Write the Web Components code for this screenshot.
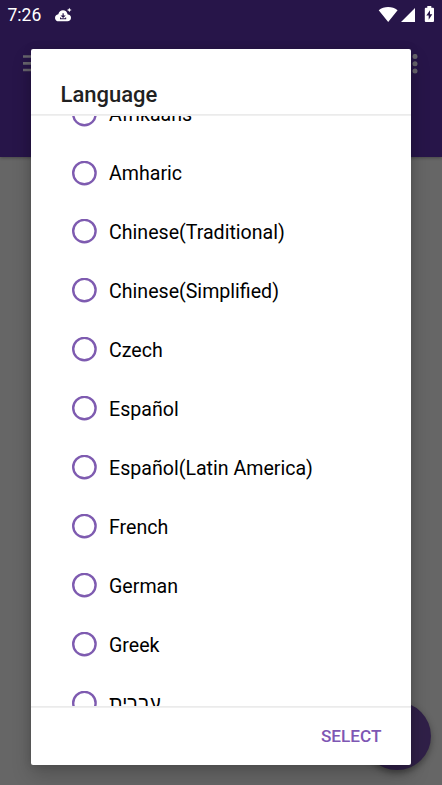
<!DOCTYPE html>
<html lang="en">
<head>
<meta charset="utf-8">
<title>Language</title>
<style>
html, body { margin: 0; height: 100%; overflow: hidden; }
body { font-family: Roboto, "Noto Sans", "Liberation Sans", sans-serif; background: #666; }
</style>
</head>
<body>
<app-screen>
  <status-bar slot="status" time="7:26"></status-bar>
  <app-toolbar slot="toolbar"></app-toolbar>
  <floating-button slot="fab"></floating-button>
  <choice-dialog slot="dialog" heading="Language">
    <radio-row>Afrikaans</radio-row>
    <radio-row>Amharic</radio-row>
    <radio-row>Chinese(Traditional)</radio-row>
    <radio-row>Chinese(Simplified)</radio-row>
    <radio-row>Czech</radio-row>
    <radio-row>Español</radio-row>
    <radio-row>Español(Latin America)</radio-row>
    <radio-row>French</radio-row>
    <radio-row>German</radio-row>
    <radio-row>Greek</radio-row>
    <radio-row>עברית</radio-row>
    <span slot="action">SELECT</span>
  </choice-dialog>
</app-screen>
<script>
function define(name, html, setup) {
  customElements.define(name, class extends HTMLElement {
    constructor() {
      super();
      this.attachShadow({ mode: 'open' }).innerHTML = html;
    }
    connectedCallback() { if (setup) setup(this, this.shadowRoot); }
  });
}

define('app-screen', `
<style>
:host { display: block; position: relative; height: 785px; overflow: hidden; background: #666; }
.head { height: 156.5px; background: #271549; box-shadow: 0 1px 3px rgba(0,0,0,.3); }
.fab { position: absolute; left: 363px; top: 702px; }
.dialog { position: absolute; left: 31px; top: 49px; }
</style>
<div class="head"><slot name="status"></slot><slot name="toolbar"></slot></div>
<div class="fab"><slot name="fab"></slot></div>
<div class="dialog"><slot name="dialog"></slot></div>`);

define('status-bar', `
<style>
:host { display: flex; align-items: center; height: 30px; padding: 0 7px 0 7.500px; color: #fff; }
.time { font-size: 17.5px; line-height: 30px; width: 46.500px; }
.gap { flex: 1; }
svg { display: block; fill: currentColor; }
</style>
<span class="time"></span>
<svg width="19" height="30" viewBox="0 0 19 30"><path d="M5 21.300C2.600 21.300 1 19.800 1 17.900C1 16 2.300 14.600 4.300 14.300C5 11.900 6.700 10.300 9 10.300C11.400 10.300 13.100 11.900 13.700 14.400C15.900 14.600 17 15.900 17 17.800C17 19.900 15.600 21.300 13.400 21.300Z"/><path d="M8.500 13.200h1.200v2.200h2l-2.600 2.600-2.600-2.600h2zM6 17.500h1v.8h4.200v-.8h1v1.700H6z" fill="#271549"/><path d="M15.300 7.800l.7 1.500 1.700.7-1.700.7-.7 1.500-.7-1.500-1.700-.7 1.700-.7z"/></svg>
<span class="gap"></span>
<svg width="57" height="30" viewBox="378 0 57 30"><path d="M378.700 10.200C384 5.900 392.300 5.900 397.600 10.200L388.200 22ZM401 22L415 8v14z"/><path fill-rule="evenodd" d="M427.300 6h4v1.800h1.700q1 0 1 1V21q0 1-1 1h-7.200q-1 0-1-1V8.800q0-1 1-1h1.500zM430 10.200l-3.700 5.400h2.400v4.200l3.600-5.600H430z"/></svg>`,
(el, root) => { root.querySelector('.time').textContent = el.getAttribute('time'); });

define('app-toolbar', `
<style>
:host { display: flex; justify-content: space-between; align-items: center; height: 68px; padding: 0 24px 0 23px; color: #68656d; }
svg { display: block; fill: currentColor; }
</style>
<svg width="22" height="18" viewBox="0 0 22 18"><path d="M0 .3h22v2.400H0zM0 7.100h22v2.600H0zM0 13.800h22v2.400H0z"/></svg>
<svg width="6" height="20" viewBox="0 0 6 20"><circle cx="3" cy="2.400" r="2.500"/><circle cx="3" cy="9.700" r="2.500"/><circle cx="3" cy="17.100" r="2.500"/></svg>`);

define('floating-button', `
<style>:host { display: block; width: 68px; height: 68px; border-radius: 50%; background: #302048; box-shadow: 0 3px 7px rgba(0,0,0,.38); }</style>`);

define('radio-row', `
<style>
:host { display: flex; align-items: center; height: 58.9px; padding-left: 41px; color: #000; font-size: 19.6px; line-height: 24px; white-space: nowrap; }
svg { display: block; margin-right: 12px; flex: none; }
span { padding-top: 2.600px; }
</style>
<svg width="25" height="25" viewBox="0 0 25 25"><circle cx="12.400" cy="12.100" r="11.200" fill="none" stroke="#7e5bb0" stroke-width="2.400"/></svg>
<span><slot></slot></span>`);

define('choice-dialog', `
<style>
:host { display: flex; flex-direction: column; width: 380px; height: 716px; background: #fff; border-radius: 2px; overflow: hidden; box-shadow: 0 10px 20px rgba(0,0,0,.2), 0 0 9px rgba(0,0,0,.15); }
header { height: 65px; box-sizing: border-box; padding: 31px 29.500px 0; font-size: 22px; font-weight: 500; line-height: 29px; color: #212121; }
.line { height: 2px; background: linear-gradient(#ebebeb 50%, #f0f0f0 50%); flex: none; }
.list { flex: 1; min-height: 0; overflow: hidden; }
.items { margin-top: -31.25px; }
footer { height: 57px; box-sizing: border-box; display: flex; align-items: center; justify-content: flex-end; padding: 0 29.500px 1.500px 0; font-size: 17.2px; font-weight: 500; color: #7e57b4; }
</style>
<header></header>
<div class="line"></div>
<div class="list"><div class="items"><slot></slot></div></div>
<div class="line"></div>
<footer><slot name="action"></slot></footer>`,
(el, root) => { root.querySelector('header').textContent = el.getAttribute('heading'); });
</script>
</body>
</html>
